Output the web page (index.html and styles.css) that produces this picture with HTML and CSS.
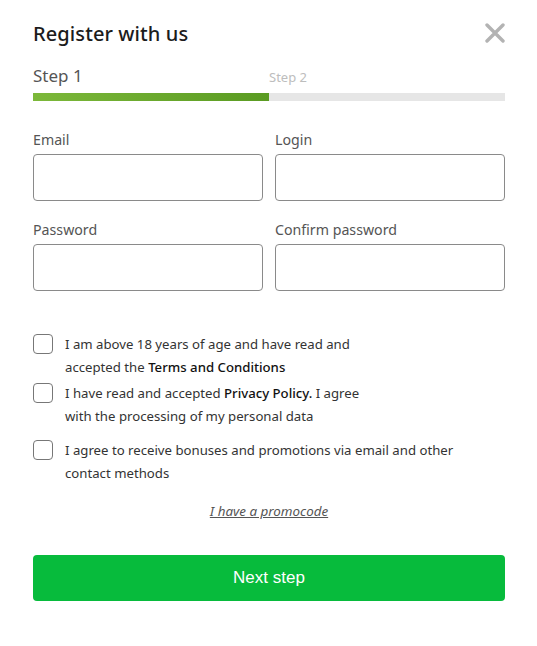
FILE: index.html
```html
<!DOCTYPE html>
<html>
<head>
<meta charset="utf-8">
<link rel="stylesheet" href="styles.css">
</head>
<body>
<div class="modal">
  <div class="header">
    <h1 class="title">Register with us</h1>
    <svg class="close" width="20" height="20" viewBox="0 0 20 20"><path d="M2 2 L18 18 M18 2 L2 18" stroke="#b3b3b3" stroke-width="3.4" stroke-linecap="round"/></svg>
  </div>
  <div class="steps">
    <span class="step active">Step 1</span>
    <span class="step">Step 2</span>
  </div>
  <div class="progress"><div class="fill"></div></div>
  <div class="grid">
    <label class="field"><span class="label">Email</span><input class="input" type="text"></label>
    <label class="field"><span class="label">Login</span><input class="input" type="text"></label>
    <label class="field"><span class="label">Password</span><input class="input" type="password"></label>
    <label class="field"><span class="label">Confirm password</span><input class="input" type="password"></label>
  </div>
  <div class="checks">
    <div class="check c1"><span class="box"></span><p>I am above 18 years of age and have read and<br>accepted the <b>Terms and Conditions</b></p></div>
    <div class="check c2"><span class="box"></span><p>I have read and accepted <b>Privacy Policy.</b> I agree<br>with the processing of my personal data</p></div>
    <div class="check c3"><span class="box"></span><p>I agree to receive bonuses and promotions via email and other<br>contact methods</p></div>
  </div>
  <div class="promo"><a href="#">I have a promocode</a></div>
  <button class="next">Next step</button>
</div>
</body>
</html>
```
FILE: styles.css
```css
* { box-sizing: border-box; }
body { margin: 0; background: #fff; font-family: "Noto Sans", "Inter", sans-serif; color: #222; }
.modal { width: 537px; padding: 18px 32px 0 33px; }
.header { display: flex; justify-content: space-between; align-items: center; height: 30px; }
.title { margin: 0; font-size: 20px; font-weight: 500; color: #1c1c1c; letter-spacing: 0.1px; }
.steps { display: flex; margin-top: 16px; height: 24px; align-items: baseline; }
.step { width: 236px; font-size: 13px; color: #bdbdbd; }
.step.active { font-size: 17px; color: #555; }
.progress { margin-top: 5px; height: 8px; background: #e6e6e6; }
.fill { width: 236px; height: 100%; background: linear-gradient(90deg, #7cb83a, #5a9b22); }
.grid { display: grid; grid-template-columns: minmax(0, 1fr) minmax(0, 1fr); column-gap: 12px; row-gap: 19px; margin-top: 29px; }
.field { display: flex; flex-direction: column; min-width: 0; }
.label { font-size: 14.2px; color: #555; height: 24px; line-height: 20px; }
.input { width: 100%; height: 47px; border: 1px solid #8a8a8a; border-radius: 4px; font: inherit; padding: 0 10px; }
.checks { margin-top: 43px; }
.check { display: flex; align-items: flex-start; }
.check p { margin: 0; font-size: 13.2px; line-height: 23px; color: #333; margin-top: -1px; }
.check b { font-weight: 500; color: #111; }
.box { width: 20px; height: 20px; border: 1px solid #777; border-radius: 4px; margin-right: 12px; flex: none; }
.c2 { margin-top: 4px; }
.c3 { margin-top: 12px; }
.promo { text-align: center; margin-top: 14px; }
.promo a { font-size: 13.4px; font-style: italic; color: #555; text-decoration: underline; }
.next { display: block; width: 472px; height: 46px; margin-top: 34px; background: #07bb3c; border: none; border-radius: 4px; color: #fff; font-family: "Liberation Sans", Arial, sans-serif; font-size: 17px; }
```
